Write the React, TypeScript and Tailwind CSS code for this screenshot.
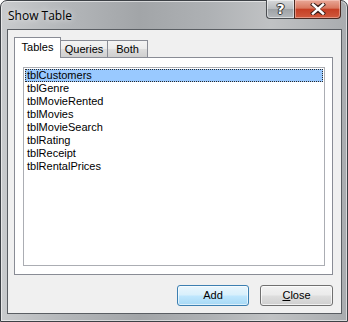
import React from "react";

const items = [
  "tblCustomers",
  "tblGenre",
  "tblMovieRented",
  "tblMovies",
  "tblMovieSearch",
  "tblRating",
  "tblReceipt",
  "tblRentalPrices",
];

export default function App() {
  return (
    <div className="w-[348px] h-[322px] bg-white">
      <div className="w-[348px] h-[322px] flex flex-col rounded-t-[7px] border border-[#3d4146] bg-[linear-gradient(90deg,#c9cbcd_0%,#b4b7ba_18%,#a2a5a8_40%,#aeb1b4_60%,#c0c2c4_78%,#a9acaf_100%)] shadow-[inset_0_0_0_1px_rgba(255,255,255,0.55)] font-['Liberation_Sans',sans-serif]">
        {/* Title bar */}
        <div className="h-[28px] flex items-start shrink-0">
          <div className="pl-[7px] pt-[7px] text-[12px] leading-[16px] text-black [text-shadow:0_0_6px_rgba(255,255,255,0.9)] font-['Open_Sans',sans-serif]">
            Show Table
          </div>
          <div className="ml-auto mr-[6px] -mt-px flex">
            <div className="w-[28px] h-[19px] rounded-bl-[4px] border border-[#4a4d51] border-t-0 border-r-0 bg-[linear-gradient(180deg,#d7d9db_0%,#b9bcbf_48%,#9ea2a6_52%,#b4b8bc_100%)] shadow-[inset_0_0_0_1px_rgba(255,255,255,0.5)] flex items-center justify-center">
              <span className="text-[14px] leading-none font-bold text-white font-['DejaVu_Sans',sans-serif] [text-shadow:0_0_1px_#222,0_0_1px_#222,1px_0_0_#444,-1px_0_0_#444,0_1px_0_#444,0_-1px_0_#444]">
                ?
              </span>
            </div>
            <div className="w-[47px] h-[19px] rounded-br-[4px] border border-[#4a2a22] border-t-0 bg-[linear-gradient(180deg,#e9a898_0%,#d9785f_45%,#c63f24_52%,#d05a3e_100%)] shadow-[inset_0_0_0_1px_rgba(255,220,210,0.45)] flex items-center justify-center">
              <svg width="16" height="12" viewBox="0 0 16 12">
                <path
                  d="M3 1.5 L8 5 L13 1.5 M3 10.5 L8 7 L13 10.5 M8 5 L8 7"
                  stroke="#3a1e18"
                  strokeWidth="4.2"
                  fill="none"
                  strokeLinecap="square"
                />
                <path
                  d="M3 1.5 L13 10.5 M13 1.5 L3 10.5"
                  stroke="#ffffff"
                  strokeWidth="2.4"
                  fill="none"
                  strokeLinecap="square"
                />
              </svg>
            </div>
          </div>
        </div>

        {/* Client area */}
        <div className="ml-[6px] mr-[5px] h-[285px] shrink-0 border border-[#5a5e63] bg-[#f0f0f0] flex flex-col text-[11px] text-black">
          {/* Tabs */}
          <div className="pl-[6px] pt-[7px] flex items-end h-[27px] shrink-0">
            <div className="relative z-10 w-[47px] h-[21px] -mb-px border border-b-0 border-[#898c95] bg-white flex justify-center pt-[3px] leading-[13px]">
              Tables
            </div>
            <div className="w-[47px] h-[17px] border border-l-0 border-b-0 border-[#898c95] bg-[linear-gradient(180deg,#f3f3f3_0%,#ebebeb_50%,#dddddd_51%,#cfcfcf_100%)] flex justify-center pt-[2px] leading-[13px]">
              Queries
            </div>
            <div className="w-[40px] h-[17px] border border-l-0 border-b-0 border-[#898c95] bg-[linear-gradient(180deg,#f3f3f3_0%,#ebebeb_50%,#dddddd_51%,#cfcfcf_100%)] flex justify-center pt-[2px] leading-[13px]">
              Both
            </div>
          </div>

          {/* Panel */}
          <div className="ml-[6px] mr-[8px] h-[218px] shrink-0 border border-[#898c95] bg-white pl-[8px] pr-[7px] pt-[9px] pb-[8px] flex">
            <div className="flex-1 border border-[#abadb3] bg-white p-px flex flex-col">
              {items.map((t, i) => (
                <div
                  key={t}
                  className={
                    i === 0
                      ? "h-[13px] leading-[11px] pl-[1px] border border-dotted border-[#2a2a2a] bg-[#99c9ff]"
                      : "h-[13px] leading-[13px] pl-[2px]"
                  }
                >
                  {t}
                </div>
              ))}
            </div>
          </div>

          {/* Buttons */}
          <div className="mt-[10px] mr-[8px] flex justify-end gap-[11px]">
            <div className="w-[72px] h-[21px] rounded-[3px] border border-[#3c7fb1] bg-[linear-gradient(180deg,#eaf6fd_0%,#d9f0fc_45%,#bee6fd_55%,#a7d9f5_100%)] shadow-[inset_0_0_0_1px_rgba(255,255,255,0.6)] flex items-center justify-center">
              Add
            </div>
            <div className="w-[73px] h-[21px] rounded-[3px] border border-[#707070] bg-[linear-gradient(180deg,#f2f2f2_0%,#ebebeb_45%,#dddddd_55%,#cfcfcf_100%)] shadow-[inset_0_0_0_1px_rgba(255,255,255,0.7)] flex items-center justify-center">
              <span>
                <span className="underline">C</span>lose
              </span>
            </div>
          </div>
        </div>
      </div>
    </div>
  );
}
